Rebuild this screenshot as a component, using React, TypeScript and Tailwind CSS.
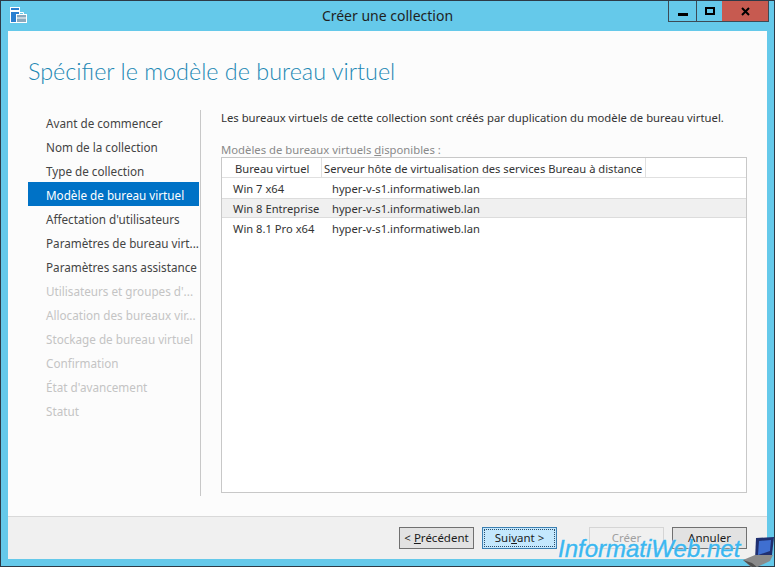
const steps: [string, number][] = [
  ["Avant de commencer", 1],
  ["Nom de la collection", 1],
  ["Type de collection", 1],
  ["Modèle de bureau virtuel", 2],
  ["Affectation d'utilisateurs", 1],
  ["Paramètres de bureau virt...", 1],
  ["Paramètres sans assistance", 1],
  ["Utilisateurs et groupes d'...", 0],
  ["Allocation des bureaux vir...", 0],
  ["Stockage de bureau virtuel", 0],
  ["Confirmation", 0],
  ["État d'avancement", 0],
  ["Statut", 0],
];

const rows = [
  ["Win 7 x64", false],
  ["Win 8 Entreprise", true],
  ["Win 8.1 Pro x64", false],
] as const;

function Btn({ children, kind = "normal" }: { children: React.ReactNode; kind?: "normal" | "focus" | "disabled" }) {
  const cls =
    kind === "focus"
      ? "border-[#3c7fb1] bg-[#c4e8fd] text-[#1a1a1a]"
      : kind === "disabled"
        ? "border-[#d5d5d5] bg-[#f0f0f0] text-[#a0a0a0]"
        : "border-[#707070] bg-[#e2e2e2] text-[#1a1a1a]";
  return (
    <div className={`relative flex h-[22px] w-[75px] items-center justify-center whitespace-nowrap border text-[11.5px] ${cls}`}>
      {kind === "focus" && <div className="absolute inset-[1px] border border-dotted border-[#2c4f6e]" />}
      {children}
    </div>
  );
}

export default function App() {
  return (
    <div className="flex h-[567px] w-[775px] flex-col overflow-hidden border border-[#2d3a47] bg-[#65c9ea] font-['Noto_Sans','Open_Sans',sans-serif]">
      <div className="relative flex h-[30px] shrink-0 items-center justify-center text-[14px] text-[#1f1f1f]">
        <svg className="absolute left-[9px] top-[6px]" width="17" height="17" viewBox="0 0 17 17">
          <rect x="0.5" y="0.5" width="9" height="15" fill="#2a7fd0" stroke="#fff" />
          <rect x="1" y="3" width="8" height="2" fill="#fff" />
          <rect x="6.5" y="7.5" width="10" height="8" fill="#8ba9bd" stroke="#fff" />
          <path d="M9.5 7.5V5.5h4v2" fill="none" stroke="#fff" />
          <path d="M7 11h9" stroke="#fff" />
        </svg>
        <span className="mt-[-1px]">Créer une collection</span>
        <div className="absolute right-[5px] top-0 flex h-[21px] border-x border-b border-[#3c4a55]">
          <div className="flex w-[28px] items-end justify-center border-r border-[#3c4a55] pb-[5px]">
            <div className="h-[3px] w-[10px] bg-black" />
          </div>
          <div className="flex w-[25px] items-center justify-center">
            <div className="h-[8px] w-[10px] border-2 border-black" />
          </div>
          <div className="flex w-[46px] items-center justify-center bg-[#c75a50]">
            <svg width="9" height="9" viewBox="0 0 9 9">
              <path d="M1 1l7 7M8 1L1 8" stroke="#000" strokeWidth="2" />
            </svg>
          </div>
        </div>
      </div>

      <div className="mx-[7px] flex flex-1 flex-col bg-[#fcfcfc]">
        <div className="flex h-[79px] shrink-0 items-center pt-[2px] pl-[20px] font-['Lato',sans-serif] text-[23.4px] font-light text-[#1c88b4]">
          Spécifier le modèle de bureau virtuel
        </div>
        <div className="flex flex-1">
          <div className="mb-[20px] w-[193px] shrink-0 border-r border-[#c8c8c8] pl-[20px] pr-[1px]">
            {steps.map(([t, s]) => (
              <div
                key={t}
                className={`flex h-[24px] items-center pl-[18px] pt-[3px] text-[11.7px] whitespace-nowrap ${
                  s === 2 ? "bg-[#0072c6] text-white" : s === 1 ? "text-[#444444]" : "text-[#c4c4c4]"
                }`}
              >
                {t}
              </div>
            ))}
          </div>
          <div className="flex flex-1 flex-col pl-[20px] pr-[20px]">
            <div className="flex h-[14px] items-center whitespace-nowrap pt-[2px] text-[11.3px] text-[#333333]">
              Les bureaux virtuels de cette collection sont créés par duplication du modèle de bureau virtuel.
            </div>
            <div className="mt-[18px] flex h-[14px] items-center pt-[2px] text-[11.3px] text-[#8a8a8a]">
              <span>
                Modèles de bureaux virtuels <u>d</u>isponibles :
              </span>
            </div>
            <div className="mb-[23px] mt-[1px] flex flex-1 flex-col border border-[#c8c8c8] bg-white text-[11.2px] text-[#333333]">
              <div className="flex h-[20px] shrink-0 border-b border-[#e0e0e0]">
                <div className="w-[100px] border-r border-[#e0e0e0] pl-[13px] leading-[21px]">Bureau virtuel</div>
                <div className="w-[324px] whitespace-nowrap border-r border-[#e0e0e0] pl-[2px] leading-[21px]">
                  Serveur hôte de virtualisation des services Bureau à distance
                </div>
              </div>
              {rows.map(([n, sel]) => (
                <div
                  key={n}
                  className={`flex h-[20px] shrink-0 items-center pt-[2px] ${sel ? "border-y border-[#dcdcdc] bg-[#f0f0f0]" : ""}`}
                >
                  <div className="w-[110px] pl-[11px]">{n}</div>
                  <div>hyper-v-s1.informatiweb.lan</div>
                </div>
              ))}
            </div>
          </div>
        </div>
        <div className="flex h-[43px] shrink-0 items-start justify-end gap-[8px] border-t border-[#d9d9d9] bg-[#f0f0f0] pr-[20px] pt-[10px]">
          <Btn>&lt; <u className="ml-[3px]">P</u>récédent</Btn>
          <Btn kind="focus">Sui<u>v</u>ant &gt;</Btn>
          <div className="w-[16px]" />
          <Btn kind="disabled">Créer</Btn>
          <Btn>Annuler</Btn>
        </div>
      </div>
      <div className="h-[7px] shrink-0" />

      <div className="absolute left-[558px] top-[534px] font-['Liberation_Sans',sans-serif] text-[24px] italic leading-[30px] text-[#3bb7f0] [-webkit-text-stroke:0.4px_#3bb7f0] [text-shadow:0_0_2px_#ffffff]">
        InformatiWeb.net
      </div>
      <svg className="absolute left-[743px] top-[536px]" width="32" height="31" viewBox="0 0 32 31">
        <path d="M13 2l18-1-2 18-17 5z" fill="#1f2f70" />
        <path d="M16 5l12-1-1 11-12 4z" fill="#3f6fd0" />
        <path d="M0 24l12-5 18 0-3 6-13 6H8z" fill="#8a8a8a" />
        <path d="M0 24l9 7h5L9 27z" fill="#4f4f4f" />
      </svg>
    </div>
  );
}
